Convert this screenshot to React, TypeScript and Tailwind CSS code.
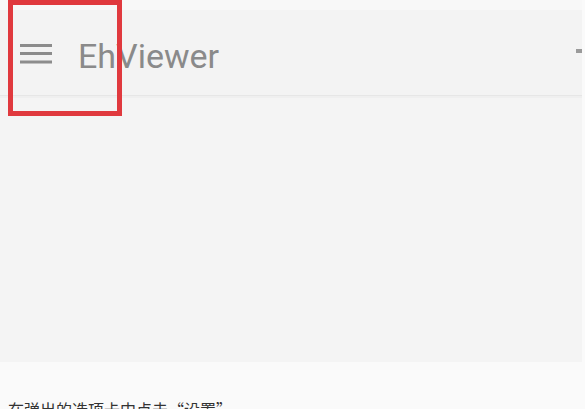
import React from 'react';

// Hamburger menu glyph, drawn to match the grey three-bar icon
const MenuIcon = () => (
  <svg width="32" height="20" viewBox="0 0 32 20" className="block">
    <rect x="0" y="0" width="32" height="3" fill="#8c8c8c" />
    <rect x="0" y="8" width="32" height="3" fill="#8c8c8c" />
    <rect x="0" y="16.5" width="32" height="3" fill="#8c8c8c" />
  </svg>
);

export default function App() {
  return (
    <div className="relative w-[585px] h-[409px] overflow-hidden bg-[#fafafa]" style={{ fontFamily: 'Roboto, "Noto Sans CJK SC", sans-serif' }}>
      <div className="w-[582px] flex flex-col">
        {/* status strip */}
        <div className="h-[10px] bg-[#f8f8f8]" />
        {/* toolbar */}
        <div className="h-[85px] bg-[#f3f3f3] flex items-center relative">
          <div className="pl-[20px] pt-[2px]">
            <MenuIcon />
          </div>
          <div className="ml-[26px] text-[34px] leading-none text-[#8a8a8a] pt-[6px]">EhViewer</div>
          <div className="ml-auto w-[6px] h-[4px] bg-[#9a9a9a] mb-[4px]" />
        </div>
        <div className="h-[1px] bg-[#e6e6e6]" />
        <div className="h-[2px] bg-[#efefef]" />
        {/* content */}
        <div className="h-[264px] bg-[#f4f4f4]" />
      </div>
      <div className="pt-[39px] pl-[8px] text-[16px] leading-none text-[#333333]" style={{ fontFamily: '"Noto Sans CJK SC", sans-serif' }}>
        在弹出的选项卡中点击“设置”
      </div>
      {/* annotation box */}
      <div className="absolute left-[8px] top-0 w-[114px] h-[116px] border-[5px] border-[#e0393e]" />
    </div>
  );
}
